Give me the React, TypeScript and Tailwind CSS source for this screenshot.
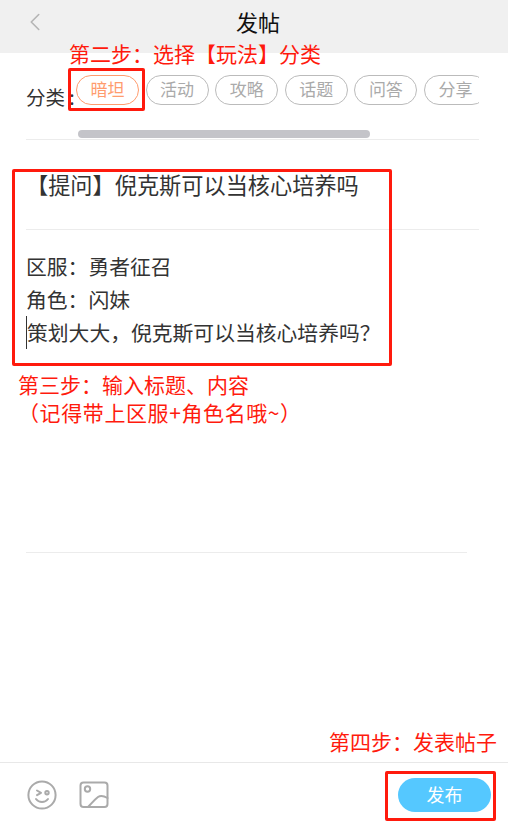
import React from 'react';
import { ChevronLeft } from 'lucide-react';

const categories = ['暗坦', '活动', '攻略', '话题', '问答', '分享'];

const Note = ({ className, children }: { className: string; children: React.ReactNode }) => (
    <div className={`absolute whitespace-nowrap text-[21px] leading-[28px] text-[#ff1a0d] ${className}`}>{children}</div>
);

const RedBox = ({ className }: { className: string }) => (
    <div className={`absolute rounded-[2px] border-[3px] border-[#ff1a0d] ${className}`} />
);

export default function App() {
    return (
        <div className="relative flex h-[827px] w-[508px] flex-col overflow-hidden bg-white font-['Noto_Sans_CJK_SC','Liberation_Sans',sans-serif] text-[#333]">
            <header className="flex h-[53px] shrink-0 items-center justify-center bg-[#f0f0f0] pb-[11px] pl-[8px] text-[22px] text-[#111]">
                <ChevronLeft className="absolute left-[20px] top-[7px] text-[#b5b5b5]" size={30} strokeWidth={1.3} />
                发帖
            </header>

            <section className="mr-[29px] ml-[26px] h-[87px] border-b border-[#ececec]">
                <div className="flex h-[77px] items-start">
                    <span className="mt-[30px] w-[50px] shrink-0 text-[19.5px] leading-[28px] whitespace-nowrap">分类 :</span>
                    <div className="mt-[22px] flex gap-[6.6px] overflow-hidden">
                        {categories.map((name, i) => (
                            <span
                                key={name}
                                className={
                                    i === 0
                                        ? 'flex h-[30px] w-[63px] shrink-0 items-center justify-center rounded-full border border-[#ff9c6e] pb-[3px] text-[17px] text-[#ff9c6e]'
                                        : 'flex h-[30px] w-[63px] shrink-0 items-center justify-center rounded-full border border-[#bbb] pb-[3px] text-[17px] text-[#aaa]'
                                }
                            >
                                {name}
                            </span>
                        ))}
                    </div>
                </div>
                <div className="ml-[52px] h-[8px] w-[292px] rounded-full bg-[#c4c4c9]" />
            </section>

            <section className="mr-[29px] ml-[26px] h-[90px] border-b border-[#ececec] pt-[26px] text-[22.2px] leading-[36px] whitespace-nowrap">
                【提问】倪克斯可以当核心培养吗
            </section>

            <section className="mx-[26px] h-[323px] w-[441px] border-b border-[#ececec] pt-[20px] text-[20.8px] leading-[33px] whitespace-nowrap">
                <p>区服&#xFF1A;勇者征召</p>
                <p>角色&#xFF1A;闪妹</p>
                <p className="border-l border-[#333]">策划大大&#xFF0C;倪克斯可以当核心培养吗&#xFF1F;</p>
            </section>

            <footer className="mt-auto flex h-[65px] items-center justify-between border-t border-[#e8e8e8] pr-[17px] pl-[27px]">
                <div className="flex items-center gap-[22px]">
                    <svg width="30" height="30" viewBox="0 0 30 30" fill="none" stroke="#aaa" strokeWidth="2" strokeLinecap="round" strokeLinejoin="round">
                        <circle cx="15" cy="15" r="13.6" />
                        <path d="M10 10.5l4 2.3-4 2.3" />
                        <circle cx="20" cy="12.8" r="1.7" />
                        <path d="M9 19c3 4 9 4 12 0" />
                    </svg>
                    <svg width="30" height="28" viewBox="0 0 30 28" fill="none" stroke="#aaa" strokeWidth="2" strokeLinecap="round" strokeLinejoin="round">
                        <rect x="1.5" y="1.5" width="27" height="24.5" rx="3" />
                        <circle cx="8.5" cy="8" r="2.7" />
                        <path d="M9 26c3-3 6-7 10-10 3-2 6-1 9.5 1" />
                    </svg>
                </div>
                <button className="flex h-[34px] w-[93px] items-center justify-center rounded-full bg-[#55c8ff] pb-[2px] text-[18px] text-white">发布</button>
            </footer>

            <Note className="top-[39px] left-[69px]">第二步&#xFF1A;选择【玩法】分类</Note>
            <RedBox className="top-[68px] left-[68px] h-[43px] w-[77px]" />
            <RedBox className="top-[169px] left-[12px] h-[197px] w-[380px]" />
            <Note className="top-[370px] left-[18px]">第三步&#xFF1A;输入标题、内容</Note>
            <Note className="top-[398px] left-[18px] tracking-[0.6px]">&#xFF08;记得带上区服+角色名哦~&#xFF09;</Note>
            <Note className="top-[727px] left-[329px]">第四步&#xFF1A;发表帖子</Note>
            <RedBox className="top-[771px] left-[385px] h-[50px] w-[111px]" />
        </div>
    );
}
